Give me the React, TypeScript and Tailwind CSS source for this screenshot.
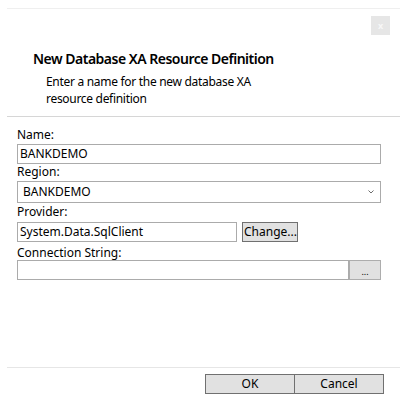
import React from "react";

function Chevron() {
  return (
    <svg width="6" height="4" viewBox="0 0 6 4" className="shrink-0">
      <path d="M0.5 0.5 L3 3 L5.5 0.5" fill="none" stroke="#6d6d6d" strokeWidth="1" />
    </svg>
  );
}

export default function App() {
  return (
    <div className="w-[407px] h-[403px] bg-white flex flex-col text-black font-['Noto_Sans',sans-serif] text-[12px] overflow-hidden">
      <div className="mx-[7px] mt-[8px] h-px bg-[#efefef]" />

      <div className="flex justify-end pr-[17px] mt-[7px]">
        <div className="w-[19px] h-[19px] bg-[#e6e6e6] flex items-center justify-center text-[9px] leading-none text-[#f7f7f7] font-bold">
          x
        </div>
      </div>

      <div className="pl-[33px] mt-[14px] h-[20px] leading-[20px] text-[14px] font-semibold tracking-[-0.5px] whitespace-nowrap">
        New Database XA Resource Definition
      </div>
      <div className="pl-[46px] mt-[4px] leading-[17px] text-[12px] tracking-[-0.3px]">
        Enter a name for the new database XA
        <br />
        resource definition
      </div>

      <div className="mx-[7px] mt-[9px] h-px bg-[#d6d6d6]" />

      <div className="mx-[17px] w-[364px] flex flex-col">
        <div className="h-[27px] pt-[10px] leading-[16px]">Name:</div>
        <div className="h-[20px] border border-[#ababab] flex items-center pl-[2px] leading-none">
          BANKDEMO
        </div>

        <div className="h-[17px] leading-[16px]">Region:</div>
        <div className="h-[22px] border border-[#ababab] flex items-center justify-between pl-[5px] pr-[6px] leading-none">
          <span>BANKDEMO</span>
          <Chevron />
        </div>

        <div className="h-[19px] pt-px leading-[16px]">Provider:</div>
        <div className="flex gap-[5px] h-[20px]">
          <div className="w-[220px] h-[20px] border border-[#ababab] flex items-center pl-[2px] leading-none">
            System.Data.SqlClient
          </div>
          <div className="w-[56px] h-[20px] border border-[#707070] bg-[#e1e1e1] flex items-center pl-px leading-none whitespace-nowrap overflow-hidden">
            Change...
          </div>
        </div>

        <div className="h-[18px] pt-[3px] leading-[16px] whitespace-nowrap">Connection String:</div>
        <div className="flex h-[20px]">
          <div className="w-[332px] h-[20px] border border-[#ababab]" />
          <div className="w-[32px] h-[20px] border border-[#adadad] bg-[#e1e1e1] flex items-end justify-center pb-[3px] text-[9px] leading-none">
            ...
          </div>
        </div>
      </div>

      <div className="mt-auto mx-[7px] h-px bg-[#e6e6e6]" />
      <div className="flex justify-end pr-[23px] mt-[6px] mb-[9px]">
        <div className="w-[90px] h-[20px] border border-[#707070] bg-[#e1e1e1] flex items-center justify-center leading-none">
          OK
        </div>
        <div className="w-[90px] -ml-px h-[20px] border border-[#707070] bg-[#e1e1e1] flex items-center justify-center leading-none">
          Cancel
        </div>
      </div>
    </div>
  );
}
